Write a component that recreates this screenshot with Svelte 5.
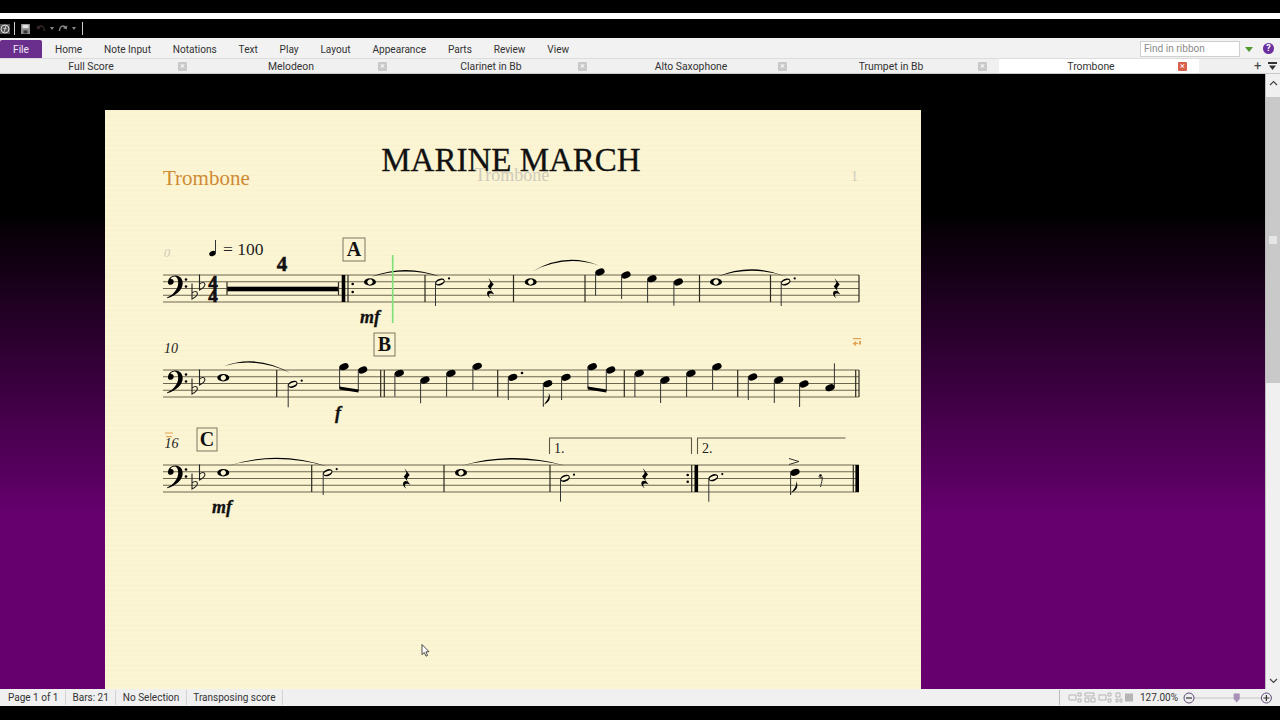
<script lang="ts">
  const ribbonTabs = ["Home", "Note Input", "Notations", "Text", "Play", "Layout", "Appearance", "Parts", "Review", "View"];
  const docTabs = ["Full Score", "Melodeon", "Clarinet in Bb", "Alto Saxophone", "Trumpet in Bb", "Trombone"];
  const statusItems = ["Page 1 of 1", "Bars: 21", "No Selection", "Transposing score"];

  const staffTops = [275, 370, 465];
  const spacing = 6.75;
  const staffLines = staffTops.flatMap((top) => [0, 1, 2, 3, 4].map((i) => top + i * spacing));

  // thin barlines: [x, staff top]
  const bars: [number, number][] = [
    [425, 275], [513.5, 275], [585, 275], [699.5, 275], [770.5, 275], [859, 275],
    [276.7, 370], [380.7, 370], [384.3, 370], [497.7, 370], [624.3, 370], [737.7, 370], [855.7, 370], [859, 370],
    [311.7, 465], [444, 465], [550, 465], [691.7, 465], [853.3, 465]
  ];
  const thickBars: [number, number][] = [[343.5, 275], [696.3, 465], [857.2, 465]];
  const thinExtra: [number, number][] = [[348, 275]];

  // filled notes: [x, y, stem end], stem goes down unless the end is above the head
  const notes: [number, number, number][] = [
    [600, 272, 295.7], [626, 275, 299], [652, 278.7, 302.7], [678.3, 282, 305.7],
    [344, 366.7, 388], [362.7, 370, 391],
    [399.3, 373.3, 396.7], [425, 380, 403.3], [451, 373.3, 396.7], [477.3, 366.3, 390],
    [512.7, 377.3, 400], [547.7, 383.7, 406.7], [566, 377.3, 400], [592.3, 366.7, 388], [610.7, 370, 391],
    [639.3, 373.3, 397], [665, 380, 403], [691, 373.3, 397], [717, 366.7, 390],
    [752.7, 377, 400], [778.7, 380, 403], [804, 384, 407], [830, 387.7, 363.3],
    [795, 472.3, 495]
  ];
  // dotted halves: [x, y, stem end]
  const halves: [number, number, number][] = [
    [440, 282, 306], [785.7, 282, 306], [292.7, 384.3, 407.3],
    [327.7, 472.7, 495], [565, 478.3, 501.7], [713.3, 477.7, 501.7]
  ];
  const wholes: [number, number][] = [[370, 282], [530.7, 282], [716, 282], [223.3, 377.7], [223.3, 472.7], [461, 472.7]];
  const rests: [number, number][] = [[490.7, 288], [836.7, 288], [406.7, 478.3], [645, 478]];
  const flags: [number, number][] = [[543.3, 406.7], [790.7, 495]];
  const dots: [number, number][] = [[522, 373], [352.7, 284], [352.7, 292], [687.7, 475], [687.7, 481.7], [820.5, 475.5]];
  const beams: [number, number, number, number][] = [[339.3, 388, 358.5, 391], [587.7, 388, 606.4, 391]];

  const slur = (x1: number, y1: number, x2: number, y2: number, top: number) => {
    const cx = (x1 + x2) / 2;
    const cy = 2 * top - (y1 + y2) / 2;
    return `M${x1} ${y1}Q${cx} ${cy} ${x2} ${y2}Q${cx} ${cy + 2.8} ${x1} ${y1}Z`;
  };
  const slurs = [
    slur(371.5, 276.7, 440, 276.7, 270),
    slur(531.7, 271.7, 599.3, 265.7, 260),
    slur(717, 276.7, 786.7, 276.7, 269.3),
    slur(224, 366, 290.7, 373.3, 361.7),
    slur(225, 466.7, 328, 466.7, 457.7),
    slur(462, 465.5, 565.7, 465.7, 458)
  ];
  const marks = [
    { label: "A", x: 343, y: 238, w: 22, h: 23 },
    { label: "B", x: 374, y: 333, w: 21, h: 23 },
    { label: "C", x: 197, y: 428, w: 20, h: 23 }
  ];

  const clefPath = "M3 9.5C3 4 7 .5 12 .5C18 .5 21 5 21 10C21 18 13 25 2 28.5L1.6 27.6C10 24 15.5 17 15.5 9.5C15.5 4.5 13.5 1.8 10.8 1.8C8.5 1.8 6.8 3.2 6.2 5C8.4 4.4 10 6 10 8C10 10.5 8.2 12 6.2 12C4.2 12 3 11 3 9.5Z";
  const flatPath = "M0 -12V3.5C3 2 5.4 0 5.4 -2C5.4 -4.6 2.4 -4.6 0 -2.4";
  const restPath = "M-2.2 -10L3 -3.4C1 -1.4 -.4 .6 .6 2.4L3.6 6.4C1 5 -2.2 5.2 -1.8 7.6C-1.6 8.8 -.8 9.6 -.2 10.2C-3 8.8 -4.6 5.6 -3 3.6C-2 2.4 -.4 2.6 .8 3.2L-3 -1.8C-1.4 -3.2 -.2 -4.6 -.4 -6Z";
  const flagPath = "M0 0C1 -5 6.5 -7 5.5 -14C8.6 -8 5 -3.6 0 -2Z";
</script>

<div class="app">
  <div class="blackout top"></div>
  <div class="white-strip"></div>

  <div class="quick-bar">
    <svg class="logo" viewBox="0 0 10 10" width="10" height="10">
      <rect width="10" height="10" fill="#555" />
      <circle cx="5" cy="5" r="4" fill="none" stroke="#ddd" stroke-width="1" />
      <path d="M6 2L4 8M3.4 4.4H6.6" stroke="#ddd" stroke-width=".8" />
    </svg>
    <span class="qsep first"></span>
    <svg class="save" viewBox="0 0 9 10" width="9" height="10">
      <rect width="9" height="10" fill="#8d8d8d" />
      <rect x="1.5" y=".8" width="6" height="3.4" fill="#e2e2e2" />
      <rect x="2.5" y="6.4" width="4" height="3" fill="#333" />
    </svg>
    <svg class="undo" viewBox="0 0 10 9" width="10" height="9">
      <path d="M2 4C4 1 8 1 8.6 7" fill="none" stroke="#3a2a2a" stroke-width="1.4" />
      <path d="M.6 1.4L1.4 5.6L5 4Z" fill="#3a2a2a" />
    </svg>
    <span class="drop"></span>
    <svg class="redo" viewBox="0 0 10 9" width="10" height="9">
      <path d="M8 4C6 1 2 1 1.4 7" fill="none" stroke="#8a8a8a" stroke-width="1.4" />
      <path d="M9.4 1.4L8.6 5.6L5 4Z" fill="#8a8a8a" />
    </svg>
    <span class="drop"></span>
    <span class="qsep"></span>
  </div>

  <div class="ribbon">
    <div class="file-tab">File</div>
    <div class="ribbon-tabs">
      {#each ribbonTabs as tab}
        <span>{tab}</span>
      {/each}
    </div>
    <div class="find">Find in ribbon</div>
    <span class="collapse"></span>
    <span class="help">?</span>
  </div>

  <div class="doc-tabs">
    {#each docTabs as tab, i}
      <div class="doc-tab" class:active={i === docTabs.length - 1}>
        <span class="doc-label">{tab}</span>
        <span class="doc-close">×</span>
      </div>
    {/each}
    <span class="tab-add">+</span>
    <svg class="tab-menu" viewBox="0 0 9 9" width="9" height="9">
      <rect width="9" height="2" fill="#333" />
      <path d="M1 3.4H8L4.5 8Z" fill="#333" />
    </svg>
  </div>

  <div class="workspace">
    <div class="canvas">
      <div class="page">
        <svg class="score" viewBox="105 110 816 600" width="816" height="600">
          <text class="title" x="511" y="171">MARINE MARCH</text>
          <text class="part-name" x="163" y="185">Trombone</text>
          <text class="part-ghost" x="512" y="181">Trombone</text>
          <text class="page-num" x="854.5" y="181">1</text>
          <text class="bar-ghost" x="167" y="257">0</text>
          <text class="bar-num" x="171" y="353">10</text>
          <text class="bar-num" x="171.5" y="448">16</text>

          {#each staffLines as y}
            <line class="staff" x1="163" x2="859" y1={y} y2={y} />
          {/each}
          {#each staffTops as top}
            <path d={clefPath} transform="translate(165.5 {top}) scale(.82)" />
            <circle cx="186" cy={top + 4.5} r="1.3" />
            <circle cx="186" cy={top + 11.5} r="1.3" />
            <path class="flat" d={flatPath} transform="translate(192 {top + 20.5})" />
            <path class="flat" d={flatPath} transform="translate(199.5 {top + 11.5})" />
          {/each}

          <text class="time" x="213" y="288.5">4</text>
          <text class="time" x="213" y="301.5">4</text>
          <text class="rest-count" x="282" y="271">4</text>
          <rect x="227" y="286.7" width="111" height="4.6" />
          <line class="bar" x1="227" x2="227" y1="282" y2="295" />
          <line class="bar" x1="338.5" x2="338.5" y1="282" y2="295" />

          <g class="tempo">
            <ellipse cx="212.5" cy="253.5" rx="3.4" ry="2.5" transform="rotate(-25 212.5 253.5)" />
            <line class="stem" x1="215.5" x2="215.5" y1="253" y2="240" />
            <text class="tempo-text" x="223" y="255">= 100</text>
          </g>

          {#each bars as [x, top]}
            <line class="bar" x1={x} x2={x} y1={top} y2={top + 4 * spacing} />
          {/each}
          {#each thinExtra as [x, top]}
            <line class="bar" x1={x} x2={x} y1={top} y2={top + 4 * spacing} />
          {/each}
          {#each thickBars as [x, top]}
            <rect x={x - 1.8} y={top} width="3.6" height={4 * spacing} />
          {/each}
          {#each dots as [x, y]}
            <circle cx={x} cy={y} r="1.3" />
          {/each}

          {#each slurs as d}
            <path {d} />
          {/each}

          {#each wholes as [x, y]}
            <ellipse cx={x} cy={y} rx="6" ry="3.7" />
            <ellipse class="hole" cx={x} cy={y} rx="2.6" ry="2.5" transform="rotate(-35 {x} {y})" />
          {/each}
          {#each halves as [x, y, end]}
            <ellipse cx={x} cy={y} rx="5" ry="3.3" transform="rotate(-22 {x} {y})" />
            <ellipse class="hole" cx={x} cy={y} rx="4" ry="1.6" transform="rotate(-22 {x} {y})" />
            <line class="stem" x1={x - 4.5} x2={x - 4.5} y1={y} y2={end} />
            <circle cx={x + 9} cy={y - 3.6} r="1.1" />
          {/each}
          {#each notes as [x, y, end]}
            <ellipse cx={x} cy={y} rx="4.8" ry="3.2" transform="rotate(-22 {x} {y})" />
            <line class="stem" x1={end < y ? x + 4.4 : x - 4.4} x2={end < y ? x + 4.4 : x - 4.4} y1={y} y2={end} />
          {/each}
          {#each beams as [x1, y1, x2, y2]}
            <path d="M{x1} {y1 - 1.6}L{x2} {y2 - 1.6}V{y2 + 1.6}L{x1} {y1 + 1.6}Z" />
          {/each}
          {#each flags as [x, y]}
            <path d={flagPath} transform="translate({x} {y})" />
          {/each}
          {#each rests as [x, y]}
            <path d={restPath} transform="translate({x} {y})" />
          {/each}
          <path class="accent" d="M789 458.5L799 461.5L789 464.5" />
          <path class="accent" d="M822.5 478C821.5 483 821 485 820.5 487M818.5 476.5C820 478 821.5 478 823 477" />

          <path class="volta" d="M549.5 454V438H691.5V454" />
          <path class="volta" d="M697.5 454V438H845.5" />
          <text class="volta-num" x="554" y="453">1.</text>
          <text class="volta-num" x="702" y="453">2.</text>

          {#each marks as m}
            <rect class="mark-box" x={m.x} y={m.y} width={m.w} height={m.h} />
            <text class="mark" x={m.x + m.w / 2} y={m.y + m.h - 5.5}>{m.label}</text>
          {/each}
          <text class="dyn" x="370" y="323">mf</text>
          <text class="dyn" x="338" y="419">f</text>
          <text class="dyn" x="222" y="513">mf</text>

          <line class="playhead" x1="392.7" x2="392.7" y1="255" y2="323" />

          <g class="layout-mark">
            <rect x="853" y="338" width="8" height="1.2" />
            <rect x="859" y="341" width="2" height="3.5" />
            <path d="M852.5 343.5L856 341V346Z" />
            <rect x="855" y="342.7" width="3" height="1.4" />
            <rect x="165" y="432.5" width="8" height="1" />
            <rect x="166" y="436" width="6" height="1.2" />
          </g>

          <g class="pointer">
            <path d="M422 644.5V654.6L424.3 652.5L426 656.2L427.6 655.4L425.9 651.9L429 651.7Z" />
          </g>
        </svg>
      </div>
    </div>
    <div class="scrollbar">
      <div class="arrow-box">
        <svg viewBox="0 0 9 6" width="9" height="6"><path d="M1 5L4.5 1.5L8 5" fill="none" stroke="#444" stroke-width="1.2" /></svg>
      </div>
      <div class="thumb"><span class="grip"></span></div>
      <div class="track"></div>
      <div class="arrow-box bottom">
        <svg viewBox="0 0 9 6" width="9" height="6"><path d="M1 1L4.5 4.5L8 1" fill="none" stroke="#444" stroke-width="1.2" /></svg>
      </div>
    </div>
  </div>

  <div class="status">
    {#each statusItems as item}
      <span class="status-item">{item}</span>
    {/each}
    <div class="status-right">
      <div class="views">
        <svg viewBox="0 0 65 11" width="65" height="11">
          <g fill="none" stroke="#b5b5b5" stroke-width="1">
            <path d="M1 3h7v5H1zM10 1h3v3h-3zM10 7h3v3h-3z" />
            <path d="M17 1h9v3h-9zM17 6h4v4h-4zM23 6h4v4h-4z" />
            <path d="M31 3h7v5h-7zM40 1h3v3h-3zM40 7h3v3h-3z" />
            <path d="M48 1h4v4h-4zM48 7h2v3h-2zM52 7h2v3h-2z" />
          </g>
          <rect x="57" y="1.5" width="8" height="8" fill="#b5b5b5" />
        </svg>
      </div>
      <span class="zoom-value">127.00%</span>
      <svg class="zoom-slider" viewBox="0 0 90 12" width="90" height="12">
        <line x1="6" x2="83.4" y1="6" y2="6" stroke="#c4c4c4" />
        <circle cx="6" cy="6" r="5" fill="#eee" stroke="#5f4a78" />
        <line x1="3" x2="9" y1="6" y2="6" stroke="#333" stroke-width="1.2" />
        <path d="M50.7 1.5H56.7V7L53.7 10.5L50.7 7Z" fill="#a78fb5" />
        <circle cx="83.4" cy="6" r="5" fill="#eee" stroke="#5f4a78" />
        <path d="M80.4 6H86.4M83.4 3V9" stroke="#333" stroke-width="1.2" />
      </svg>
    </div>
  </div>
  <div class="blackout bottom"></div>
</div>

<style>
  :global(body) {
    margin: 0;
    background: #000;
  }

  .app {
    width: 1280px;
    height: 720px;
    display: flex;
    flex-direction: column;
    overflow: hidden;
    font-family: Roboto, "Noto Sans", sans-serif;
    font-size: 10.4px;
    color: #333;
  }

  .blackout {
    background: #000;
    flex: none;
  }
  .blackout.top {
    height: 13px;
  }
  .blackout.bottom {
    height: 14px;
  }

  .white-strip {
    height: 6px;
    background: #fff;
    flex: none;
  }

  .quick-bar {
    height: 19px;
    flex: none;
    background: #000;
    display: flex;
    align-items: center;
  }
  .logo {
    margin-right: 4px;
  }
  .qsep {
    width: 1px;
    height: 13px;
    background: #cfcfcf;
    margin-left: 6px;
  }
  .qsep.first {
    margin-left: 0;
    margin-right: 6px;
  }
  .undo {
    margin-left: 6px;
  }
  .redo {
    margin-left: 4px;
  }
  .drop {
    width: 0;
    height: 0;
    margin-left: 4px;
    border: 2px solid transparent;
    border-top: 3px solid #888;
    border-bottom: 0;
  }

  .ribbon {
    height: 20px;
    flex: none;
    box-sizing: border-box;
    padding-top: 2px;
    background: #f2f2f2;
    display: flex;
    align-items: stretch;
    font-size: 10.1px;
  }
  .file-tab {
    width: 42px;
    background: #6a2f8c;
    color: #f0e8f4;
    display: flex;
    align-items: center;
    justify-content: center;
    border-radius: 2px 2px 0 0;
  }
  .ribbon-tabs {
    display: flex;
    align-items: center;
    gap: 21.8px;
    margin-left: 13px;
    flex: 1;
  }
  .find {
    width: 100px;
    height: 16px;
    box-sizing: border-box;
    margin-top: 1px;
    padding-left: 3px;
    background: #fff;
    border: 1px solid #cfcfcf;
    color: #8c8c8c;
    line-height: 14px;
  }
  .collapse {
    width: 0;
    height: 0;
    margin: 7px 0 0 5px;
    border: 4px solid transparent;
    border-top: 5px solid #4f9a2c;
    border-bottom: 0;
  }
  .help {
    width: 11px;
    height: 11px;
    margin: 3px 6px 0 10px;
    border-radius: 50%;
    background: #6b2fa0;
    color: #fff;
    font-size: 9px;
    font-weight: 700;
    line-height: 11px;
    text-align: center;
  }

  .doc-tabs {
    height: 16px;
    flex: none;
    box-sizing: border-box;
    background: #f0f0f0;
    border-top: 1px solid #dcdcdc;
    border-bottom: 1px solid #c9c9c9;
    display: flex;
    align-items: stretch;
    margin-left: -1px;
  }
  .doc-tab {
    width: 200px;
    box-sizing: border-box;
    padding: 0 10px 0 7px;
    display: flex;
    align-items: center;
  }
  .doc-tab.active {
    background: #fff;
  }
  .doc-label {
    flex: 1;
    text-align: center;
  }
  .doc-close {
    width: 9px;
    height: 9px;
    margin: 0 2px;
    background: #c9c9c9;
    color: #fff;
    font-size: 9px;
    line-height: 9px;
    text-align: center;
    border-radius: 1px;
  }
  .active .doc-close {
    background: #d9604c;
  }
  .tab-add {
    margin-left: 55px;
    font-size: 13px;
    line-height: 14px;
    color: #444;
  }
  .tab-menu {
    margin: 3px 0 0 7px;
  }

  .workspace {
    flex: 1;
    min-height: 0;
    display: flex;
  }
  .canvas {
    flex: 1;
    overflow: hidden;
    box-sizing: border-box;
    padding: 36px 0 0 105px;
    background: linear-gradient(#000 0, #000 22%, #66006f 72%);
  }
  .page {
    width: 816px;
    height: 100%;
    background-color: #fcf5d3;
    background-image: repeating-linear-gradient(rgba(170, 150, 80, 0.04) 0 1px, transparent 1px 5px);
    overflow: hidden;
  }
  .score {
    display: block;
    font-family: "Liberation Serif", "Times New Roman", serif;
  }
  .title {
    font-size: 33px;
    text-anchor: middle;
    fill: #111;
    stroke: #111;
    stroke-width: 0.3;
  }
  .part-name {
    font-size: 21px;
    fill: #d08a34;
  }
  .part-ghost {
    font-size: 18px;
    text-anchor: middle;
    fill: #cfcabb;
  }
  .page-num {
    font-size: 14px;
    text-anchor: middle;
    fill: #cfcabb;
  }
  .bar-ghost {
    font-size: 13px;
    font-style: italic;
    text-anchor: middle;
    fill: #cfcabb;
  }
  .bar-num {
    font-size: 14px;
    font-style: italic;
    text-anchor: middle;
    fill: #222;
  }
  .staff {
    stroke: #5b5540;
    stroke-width: 0.9;
  }
  .bar {
    stroke: #2c2a20;
    stroke-width: 1.2;
  }
  .stem {
    stroke: #333;
    stroke-width: 1;
  }
  .flat {
    fill: none;
    stroke: #222;
    stroke-width: 1.1;
  }
  .hole {
    fill: #fcf5d3;
  }
  .time {
    font-size: 19px;
    font-weight: 700;
    text-anchor: middle;
    fill: #111;
    stroke: #111;
    stroke-width: 0.7;
  }
  .rest-count {
    font-size: 21px;
    font-weight: 700;
    text-anchor: middle;
    fill: #111;
    stroke: #111;
    stroke-width: 0.5;
  }
  .tempo-text {
    font-size: 17.5px;
    fill: #222;
  }
  .accent {
    fill: none;
    stroke: #333;
    stroke-width: 1;
  }
  .volta {
    fill: none;
    stroke: #5e5a48;
    stroke-width: 1.1;
  }
  .volta-num {
    font-size: 14px;
    fill: #222;
  }
  .mark-box {
    fill: none;
    stroke: #7a7660;
    stroke-width: 1;
  }
  .mark {
    font-size: 20px;
    font-weight: 700;
    text-anchor: middle;
    fill: #111;
  }
  .dyn {
    font-size: 18px;
    font-weight: 700;
    font-style: italic;
    text-anchor: middle;
    fill: #111;
    stroke: #111;
    stroke-width: 0.3;
  }
  .playhead {
    stroke: #7fe07a;
    stroke-width: 1.6;
  }
  .layout-mark {
    fill: #e2a253;
  }
  .pointer {
    fill: #fff;
    stroke: #222;
    stroke-width: 0.8;
  }

  .scrollbar {
    width: 15px;
    flex: none;
    display: flex;
    flex-direction: column;
    background: #f0f0f0;
    border-left: 1px solid #bdbdbd;
    box-sizing: border-box;
  }
  .arrow-box {
    height: 23px;
    display: flex;
    align-items: center;
    justify-content: center;
    padding-bottom: 6px;
    box-sizing: border-box;
  }
  .arrow-box.bottom {
    height: 16px;
    padding: 0;
  }
  .thumb {
    height: 286px;
    flex: none;
    background: #c9c9c9;
    display: flex;
    align-items: center;
    justify-content: center;
  }
  .grip {
    width: 8px;
    height: 8px;
    background: #e6e6e6;
  }
  .track {
    flex: 1;
  }

  .status {
    height: 17px;
    flex: none;
    background: #f0f0f0;
    display: flex;
    align-items: center;
    font-size: 10px;
  }
  .status-item {
    padding: 0 6.5px;
    line-height: 15px;
    border-right: 1px solid #d2d2d2;
  }
  .status-item:first-child {
    padding-left: 8px;
  }
  .status-right {
    margin-left: auto;
    display: flex;
    align-items: center;
  }
  .views {
    height: 15px;
    display: flex;
    align-items: center;
    padding: 0 7px 0 8px;
    border-left: 1px solid #bbb;
  }
  .zoom-slider {
    margin: 0 6.7px 0 5.3px;
  }
</style>
